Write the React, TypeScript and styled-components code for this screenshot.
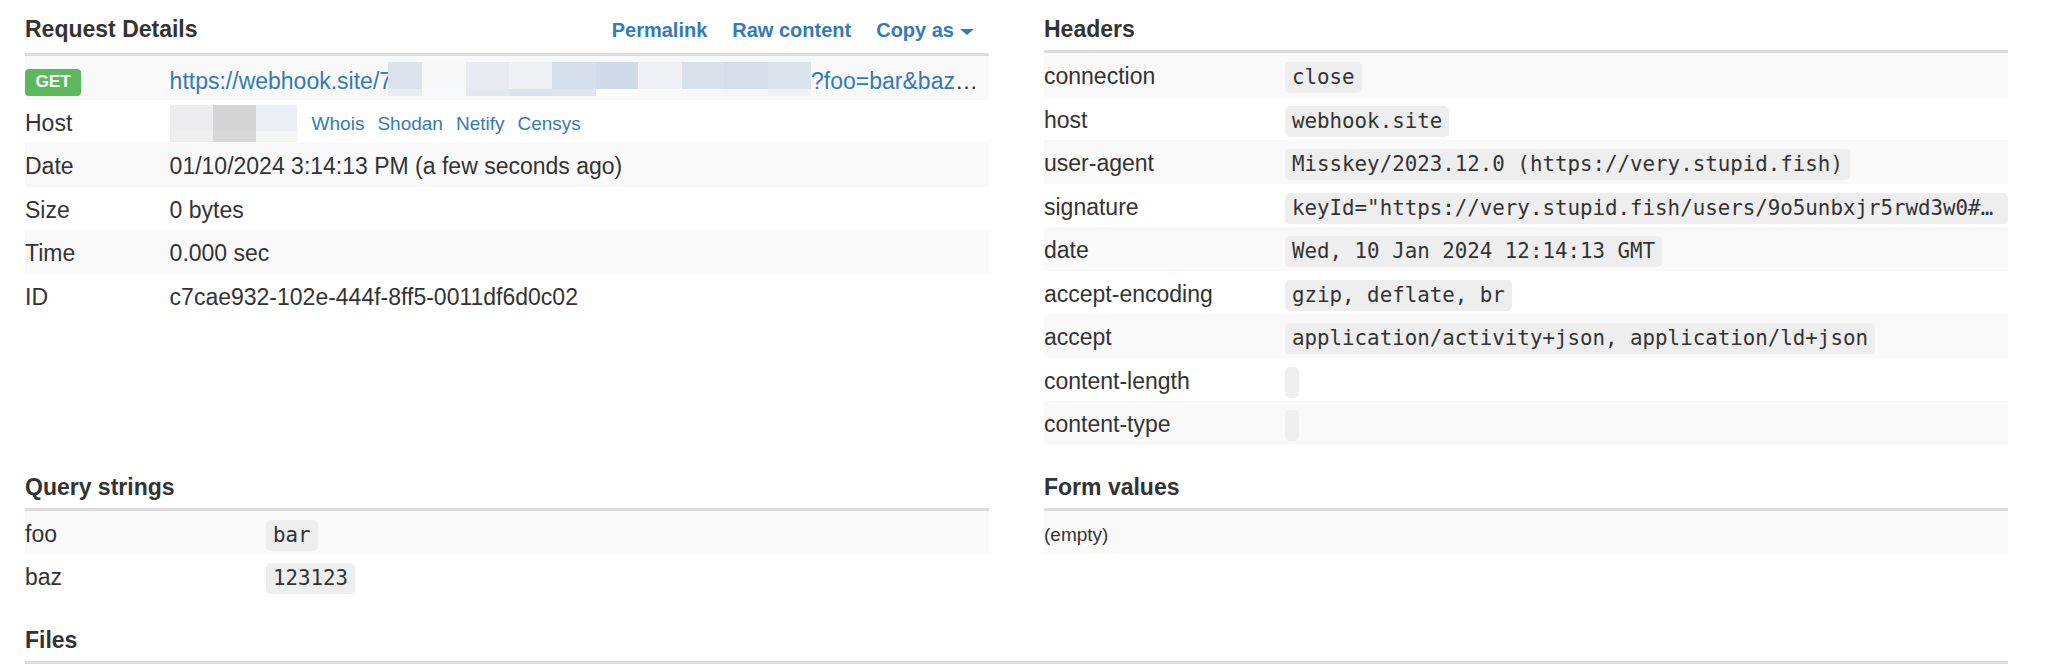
import styled, { createGlobalStyle } from 'styled-components';

const GlobalStyle = createGlobalStyle`
  html, body {
    margin: 0;
    padding: 0;
    background: #fff;
  }
  body {
    font-family: "Liberation Sans", Arial, Helvetica, sans-serif;
    font-size: 23px;
    color: #333;
  }
`;

const Page = styled.div`
  display: grid;
  grid-template-columns: 1fr 1fr;
  column-gap: 55px;
  row-gap: 20px;
  align-items: start;
  padding: 7px 40px 0 25px;
`;

const Section = styled.section<{ $wide?: boolean }>`
  min-width: 0;
  grid-column: ${p => (p.$wide ? '1 / -1' : 'auto')};
`;

const Head = styled.div`
  display: flex;
  align-items: baseline;
  justify-content: space-between;
  padding: 6px 0 4px;
  line-height: 33px;
  border-bottom: 3px solid #ddd;
`;

const Title = styled.h3`
  margin: 0;
  font-size: 23px;
  font-weight: bold;
  color: #333;
`;

const HeadLinks = styled.div`
  display: flex;
  align-items: baseline;
  gap: 25px;
  padding: 0 15px 2px 0;
`;

const HeadLink = styled.a`
  font-size: 20px;
  font-weight: bold;
  color: #337ab7;
  text-decoration: none;
`;

const Caret = styled.span`
  display: inline-block;
  margin-left: 6px;
  vertical-align: middle;
  border-top: 6px solid #337ab7;
  border-left: 7px solid transparent;
  border-right: 7px solid transparent;
`;

const Table = styled.table`
  width: 100%;
  table-layout: fixed;
  border-collapse: collapse;
`;

const Row = styled.tr`
  height: 43.5px;
  &:nth-child(odd) {
    background: #f9f9f9;
  }
`;

const Label = styled.td<{ $w: string }>`
  width: ${p => p.$w};
  padding: 4px 0 0;
  line-height: 33px;
  vertical-align: middle;
  white-space: nowrap;
`;

const Value = styled.td`
  padding: 4px 0 0;
  line-height: 33px;
  vertical-align: middle;
  white-space: nowrap;
  overflow: hidden;
  text-overflow: ellipsis;
`;

const Empty = styled.td`
  padding: 4px 0 0;
  line-height: 33px;
  vertical-align: middle;
  font-size: 19px;
`;

const Badge = styled.span`
  display: inline-block;
  padding: 3.5px 10.4px 5.2px;
  font-size: 17.25px;
  line-height: 19.3px;
  font-weight: bold;
  color: #fff;
  background: #5cb85c;
  border-radius: 4px;
`;

const Link = styled.a`
  color: #337ab7;
  text-decoration: none;
`;

const SideLinks = styled.span`
  display: inline-flex;
  gap: 13px;
  margin-left: 15px;
  font-size: 19px;
`;

const Mosaic = styled.span<{ $drop: number; $shift?: number }>`
  display: inline-flex;
  vertical-align: ${p => -p.$drop}px;
  margin-left: ${p => p.$shift ?? 0}px;
`;

const Tile = styled.span<{ $w: number; $h: number; $split: number; $top: string; $bottom: string }>`
  width: ${p => p.$w}px;
  height: ${p => p.$h}px;
  background: linear-gradient(
    to bottom,
    ${p => p.$top} 0,
    ${p => p.$top} ${p => p.$split}px,
    ${p => p.$bottom} ${p => p.$split}px,
    ${p => p.$bottom} 100%
  );
`;

const Code = styled.code`
  display: inline-block;
  box-sizing: border-box;
  max-width: 100%;
  min-width: 14px;
  height: 31px;
  padding: 0 7px;
  vertical-align: middle;
  font-family: "DejaVu Sans Mono", "Liberation Mono", monospace;
  font-size: 20.8px;
  line-height: 31px;
  color: #333;
  background: #eee;
  border-radius: 5px;
  white-space: nowrap;
  overflow: hidden;
  text-overflow: ellipsis;
`;

// pixelated (redacted) parts of the url and host
const urlTiles: [number, string, string][] = [
  [34, '#dce3ed', '#e7ecf2'],
  [44, '#f8f8f9', '#f8f9fa'],
  [43, '#e7ebf1', '#e4e9f0'],
  [43, '#eff1f4', '#dde4ed'],
  [44, '#d4dfeb', '#dfe6ef'],
  [42, '#d0dbe9', '#fefefe'],
  [44, '#eff1f4', '#f9f9fa'],
  [42, '#d9e2ec', '#f6f7f9'],
  [44, '#d4deea', '#f5f6f8'],
  [43, '#dbe3ed', '#eef1f5'],
];

const hostTiles: [number, string, string][] = [
  [43, '#ececee', '#eeeeef'],
  [43, '#d5d5d5', '#d8d8d8'],
  [41, '#ebeef4', '#f4f4f5'],
];

const details: [string, string][] = [
  ['Date', '01/10/2024 3:14:13 PM (a few seconds ago)'],
  ['Size', '0 bytes'],
  ['Time', '0.000 sec'],
  ['ID', 'c7cae932-102e-444f-8ff5-0011df6d0c02'],
];

const headers: [string, string][] = [
  ['connection', 'close'],
  ['host', 'webhook.site'],
  ['user-agent', 'Misskey/2023.12.0 (https://very.stupid.fish)'],
  [
    'signature',
    'keyId="https://very.stupid.fish/users/9o5unbxjr5rwd3w0#main-key",algorithm="rsa-sha256",headers="(request-target) date host accept"',
  ],
  ['date', 'Wed, 10 Jan 2024 12:14:13 GMT'],
  ['accept-encoding', 'gzip, deflate, br'],
  ['accept', 'application/activity+json, application/ld+json'],
  ['content-length', ''],
  ['content-type', ''],
];

const query: [string, string][] = [
  ['foo', 'bar'],
  ['baz', '123123'],
];

export default function App() {
  return (
    <>
      <GlobalStyle />
      <Page>
        <Section>
          <Head>
            <Title>Request Details</Title>
            <HeadLinks>
              <HeadLink href="#">Permalink</HeadLink>
              <HeadLink href="#">Raw content</HeadLink>
              <HeadLink href="#">
                Copy as
                <Caret />
              </HeadLink>
            </HeadLinks>
          </Head>
          <Table>
            <tbody>
              <Row>
                <Label $w="15%">
                  <Badge>GET</Badge>
                </Label>
                <Value>
                  <Link href="#">
                    https://webhook.site/7
                    <Mosaic $drop={7.5} $shift={-4}>
                      {urlTiles.map(([w, top, bottom], i) => (
                        <Tile key={i} $w={w} $h={34} $split={27} $top={top} $bottom={bottom} />
                      ))}
                    </Mosaic>
                    ?foo=bar&amp;baz=123123
                  </Link>
                </Value>
              </Row>
              <Row>
                <Label $w="15%">Host</Label>
                <Value>
                  <Mosaic $drop={12}>
                    {hostTiles.map(([w, top, bottom], i) => (
                      <Tile key={i} $w={w} $h={37} $split={26} $top={top} $bottom={bottom} />
                    ))}
                  </Mosaic>
                  <SideLinks>
                    <Link href="#">Whois</Link>
                    <Link href="#">Shodan</Link>
                    <Link href="#">Netify</Link>
                    <Link href="#">Censys</Link>
                  </SideLinks>
                </Value>
              </Row>
              {details.map(([k, v]) => (
                <Row key={k}>
                  <Label $w="15%">{k}</Label>
                  <Value>{v}</Value>
                </Row>
              ))}
            </tbody>
          </Table>
        </Section>

        <Section>
          <Head>
            <Title>Headers</Title>
          </Head>
          <Table>
            <tbody>
              {headers.map(([k, v]) => (
                <Row key={k}>
                  <Label $w="25%">{k}</Label>
                  <Value>
                    <Code>{v}</Code>
                  </Value>
                </Row>
              ))}
            </tbody>
          </Table>
        </Section>

        <Section>
          <Head>
            <Title>Query strings</Title>
          </Head>
          <Table>
            <tbody>
              {query.map(([k, v]) => (
                <Row key={k}>
                  <Label $w="25%">{k}</Label>
                  <Value>
                    <Code>{v}</Code>
                  </Value>
                </Row>
              ))}
            </tbody>
          </Table>
        </Section>

        <Section>
          <Head>
            <Title>Form values</Title>
          </Head>
          <Table>
            <tbody>
              <Row>
                <Empty>(empty)</Empty>
              </Row>
            </tbody>
          </Table>
        </Section>

        <Section $wide>
          <Head>
            <Title>Files</Title>
          </Head>
        </Section>
      </Page>
    </>
  );
}
